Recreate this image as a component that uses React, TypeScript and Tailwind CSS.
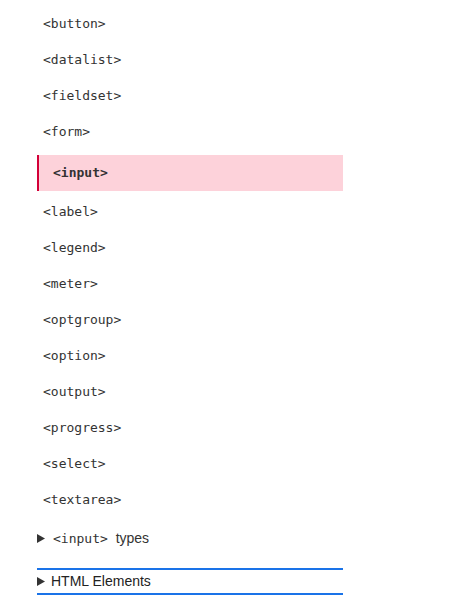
import React from "react";

const items = [
  "<button>",
  "<datalist>",
  "<fieldset>",
  "<form>",
  "<input>",
  "<label>",
  "<legend>",
  "<meter>",
  "<optgroup>",
  "<option>",
  "<output>",
  "<progress>",
  "<select>",
  "<textarea>",
];

function Tri() {
  return (
    <svg width="8" height="9" viewBox="0 0 8 9" className="shrink-0">
      <path d="M0 0 L8 4.5 L0 9 Z" fill="#333" />
    </svg>
  );
}

export default function App() {
  return (
    <div className="bg-white w-[472px] h-[610px] pt-[6px] pl-[37px] font-['Liberation_Sans',Arial,sans-serif]">
      <ul className="w-[306px] font-['DejaVu_Sans_Mono',Menlo,monospace] text-[13px] text-[#333]">
        {items.map((it) =>
          it === "<input>" ? (
            <li
              key={it}
              className="h-[36px] mt-[5px] mb-[3px] flex items-center pl-[14px] border-l-2 border-[#d30038] bg-[#fdd2da] font-bold"
            >
              {it}
            </li>
          ) : (
            <li key={it} className="h-[36px] flex items-center pl-[6px]">
              {it}
            </li>
          )
        )}
      </ul>
      <div className="mt-[2px] h-[36px] w-[306px] flex items-center gap-[8px] text-[14px] text-[#333]">
        <Tri />
        <span className="whitespace-pre">
          <span className="font-['DejaVu_Sans_Mono',Menlo,monospace] text-[13px]">&lt;input&gt; </span>types
        </span>
      </div>
      <div className="mt-[12px] h-[27px] w-[306px] flex items-center gap-[6px] border-y-2 border-[#1a73e8] text-[14px] text-[#222]">
        <Tri />
        <span>HTML Elements</span>
      </div>
    </div>
  );
}
